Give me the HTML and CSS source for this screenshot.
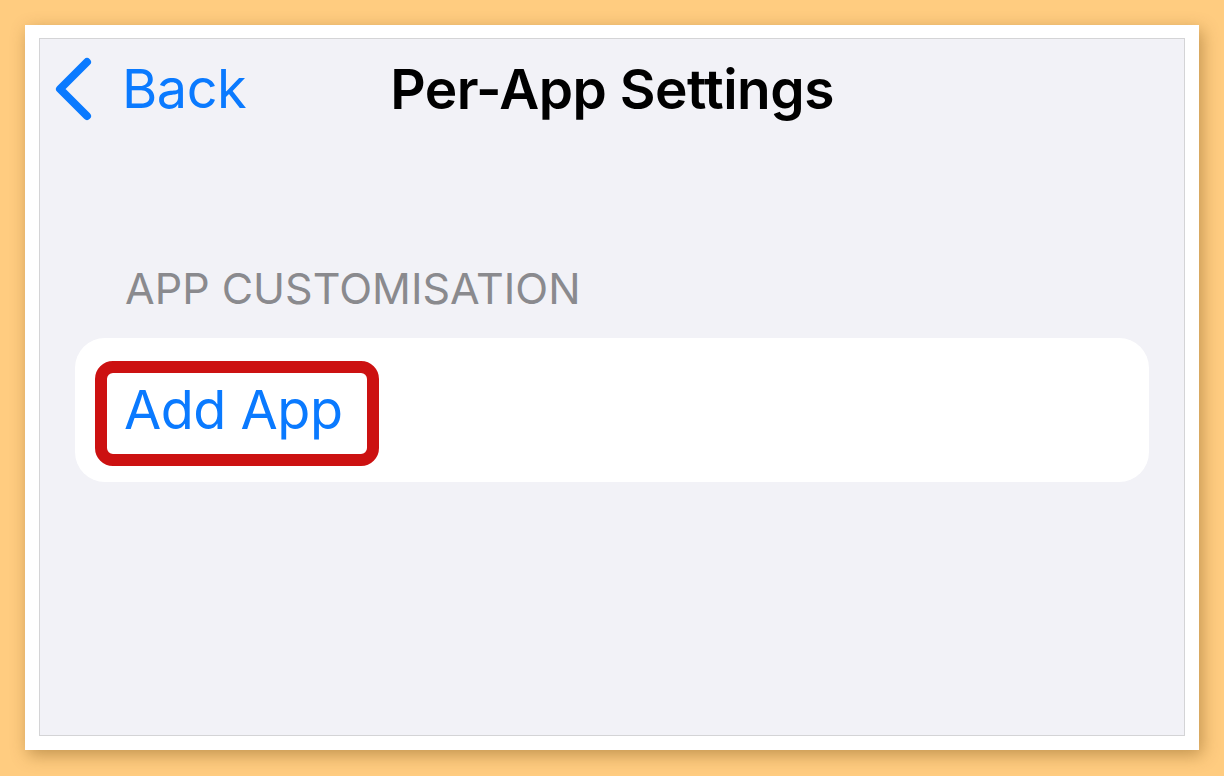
FILE: index.html
```html
<!DOCTYPE html>
<html>
<head>
<meta charset="utf-8">
<link rel="stylesheet" href="styles.css">
</head>
<body>
<div class="paper">
  <div class="screen">
    <div class="navbar">
      <div class="nav-left">
        <svg class="chevron" width="40" height="64" viewBox="0 0 40 64">
          <polyline points="33,5 6,32 33,59" fill="none" stroke="#0A7AFF" stroke-width="8" stroke-linecap="round" stroke-linejoin="round"/>
        </svg>
        <span class="back">Back</span>
      </div>
      <div class="title">Per-App Settings</div>
      <div class="nav-right"></div>
    </div>
    <div class="section-header">APP CUSTOMISATION</div>
    <div class="cell-group">
      <div class="cell">
        <span class="highlight">Add App</span>
      </div>
    </div>
  </div>
</div>
</body>
</html>
```
FILE: styles.css
```css
html, body {
  margin: 0;
  padding: 0;
}
body {
  background: #FFCC80;
  width: 1224px;
  height: 776px;
  overflow: hidden;
  font-family: Inter, "Noto Sans", sans-serif;
}
.paper {
  box-sizing: border-box;
  margin: 25px 0 0 25px;
  width: 1174px;
  height: 725px;
  padding: 13px 14px 14px 14px;
  background: #ffffff;
  box-shadow: 3px 5px 16px rgba(120, 80, 20, 0.45);
}
.screen {
  box-sizing: border-box;
  height: 100%;
  border: 1px solid #d4d4d6;
  background: #F2F2F7;
}
.navbar {
  display: grid;
  grid-template-columns: 1fr auto 1fr;
  align-items: center;
  height: 100px;
}
.nav-left {
  display: flex;
  align-items: center;
  padding-left: 14px;
}
.chevron {
  display: block;
}
.back {
  margin-left: 28px;
  color: #0A7AFF;
  font-size: 54px;
  line-height: 1;
  letter-spacing: -0.5px;
}
.title {
  font-size: 55px;
  font-weight: 600;
  line-height: 1;
  color: #000;
  letter-spacing: -0.5px;
}
.section-header {
  margin-top: 128px;
  padding-left: 85px;
  font-size: 43px;
  line-height: 1;
  color: #8A8A8E;
  letter-spacing: 0;
}
.cell-group {
  margin: 28px 35px 0 35px;
  background: #ffffff;
  border-radius: 30px;
  height: 144px;
  display: flex;
  align-items: flex-start;
  padding-left: 20px;
}
.cell {
  padding-top: 23px;
}
.highlight {
  display: inline-block;
  border: 12px solid #CC1111;
  border-radius: 18px;
  padding: 5px 25px 11px 17px;
  color: #0A7AFF;
  font-size: 54px;
  line-height: 1.2;
  letter-spacing: -0.5px;
}
```
